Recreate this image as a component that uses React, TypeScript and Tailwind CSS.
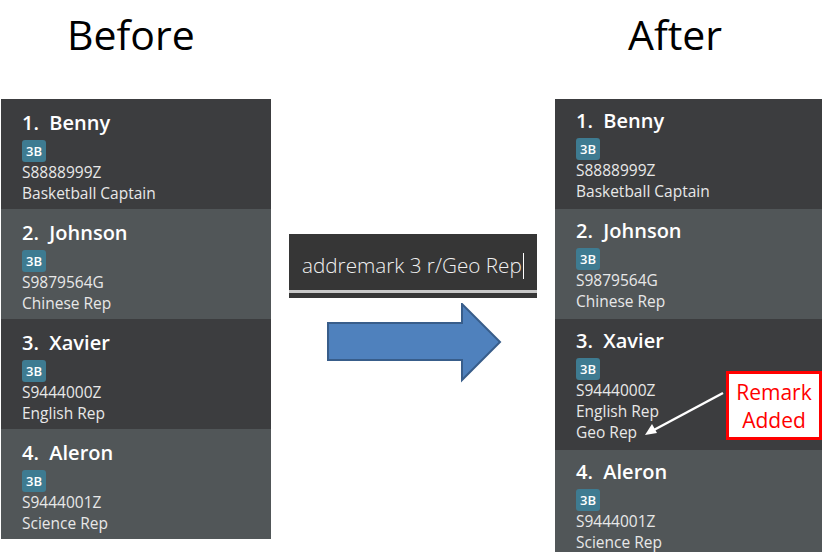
import React from "react";

interface PersonProps {
  index: number;
  name: string;
  tag: string;
  id: string;
  remarks: string[];
  alt: boolean;
  tight?: boolean;
}

const people = [
  { name: "Benny", tag: "3B", id: "S8888999Z", remarks: ["Basketball Captain"] },
  { name: "Johnson", tag: "3B", id: "S9879564G", remarks: ["Chinese Rep"] },
  { name: "Xavier", tag: "3B", id: "S9444000Z", remarks: ["English Rep"] },
  { name: "Aleron", tag: "3B", id: "S9444001Z", remarks: ["Science Rep"] },
];

function PersonCard(props: PersonProps) {
  return (
    <div
      className={
        "shrink-0 flex flex-col items-start pl-[21px] " +
        (props.tight ? "pt-[9px] pb-[7px] " : "pt-[11px] pb-[5px] ") +
        (props.alt ? "bg-[#515658]" : "bg-[#3c3d3f]")
      }
    >
      <div className="text-[20px] leading-[26px] font-semibold text-white">
        {props.index}.&nbsp;&nbsp;{props.name}
      </div>
      <div className="mt-[4px] h-[22px] px-[4px] rounded-[3px] bg-[#3e7b91] text-[13px] leading-[22px] font-semibold text-white">
        {props.tag}
      </div>
      <div className="text-[15.5px] leading-[21px] text-[#e8e8e8]">{props.id}</div>
      {props.remarks.map((r) => (
        <div key={r} className="text-[15.5px] leading-[21px] text-[#e8e8e8]">
          {r}
        </div>
      ))}
    </div>
  );
}

export default function App() {
  return (
    <div
      className="relative w-[823px] h-[552px] overflow-hidden bg-white flex"
      style={{ fontFamily: '"Open Sans", "Noto Sans", sans-serif' }}
    >
      {/* before */}
      <div className="ml-[1px] w-[270px] flex flex-col shrink-0">
        <div className="shrink-0 h-[99px] pl-[66px] pt-[6px] text-[41px] leading-[56px] text-black">Before</div>
        <div className="flex flex-col">
          {people.map((p, i) => (
            <PersonCard key={p.name} index={i + 1} alt={i % 2 === 1} {...p} />
          ))}
        </div>
      </div>

      {/* command + arrow */}
      <div className="w-[284px] flex flex-col shrink-0">
        <div className="mt-[234px] ml-[18px] w-[248px] bg-[#363636] flex flex-col">
          <div className="h-[56px] flex items-center pt-[8px] pl-[13px] text-[20.7px] font-light text-[#f0f0f0]">
            addremark 3 r/Geo Rep<span className="ml-[1px] w-[1px] h-[26px] bg-white" />
          </div>
          <div className="h-[3px] bg-[#c8c8c8]" />
          <div className="h-[5px]" />
        </div>
        <svg className="mt-[5px] ml-[56px]" width="176" height="80" viewBox="0 0 176 80">
          <polygon
            points="1,20 135,20 135,1 173,39 135,77 135,57 1,57"
            fill="#4f81bd"
            stroke="#385d8a"
            strokeWidth="2"
          />
        </svg>
      </div>

      {/* after */}
      <div className="w-[267px] flex flex-col shrink-0">
        <div className="shrink-0 h-[99px] pl-[73px] pt-[6px] text-[41px] leading-[56px] text-black">After</div>
        <div className="flex flex-col">
          {people.map((p, i) => (
            <PersonCard
              key={p.name}
              index={i + 1}
              alt={i % 2 === 1}
              tight
              {...p}
              remarks={i === 2 ? [...p.remarks, "Geo Rep"] : p.remarks}
            />
          ))}
        </div>
      </div>

      {/* annotation */}
      <div className="absolute left-[726px] top-[371px] w-[96px] h-[69px] bg-white border-[3px] border-[#ff0000] flex flex-col items-center justify-center text-[21px] leading-[28px] text-[#ff0000]">
        <span>Remark</span>
        <span>Added</span>
      </div>
      <svg className="absolute left-[640px] top-[385px]" width="90" height="56" viewBox="0 0 90 56">
        <line x1="83" y1="8" x2="12" y2="46" stroke="white" strokeWidth="2.5" />
        <polygon points="5,50 12,39 17,48" fill="white" />
      </svg>
    </div>
  );
}
